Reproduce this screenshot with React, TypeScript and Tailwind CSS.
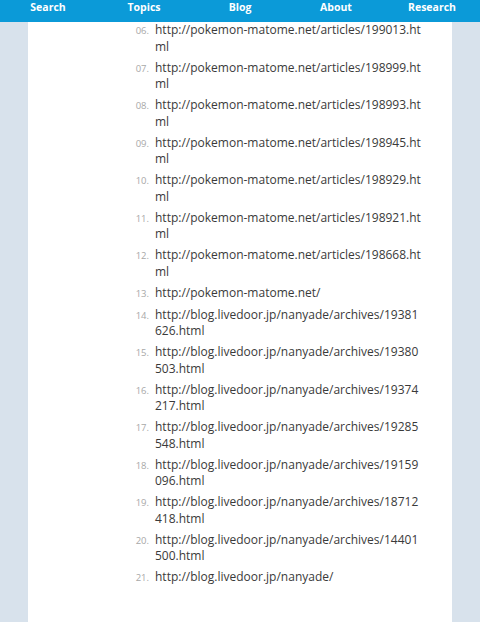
const links = [
  { n: '06.', url: 'http://pokemon-matome.net/articles/199013.html' },
  { n: '07.', url: 'http://pokemon-matome.net/articles/198999.html' },
  { n: '08.', url: 'http://pokemon-matome.net/articles/198993.html' },
  { n: '09.', url: 'http://pokemon-matome.net/articles/198945.html' },
  { n: '10.', url: 'http://pokemon-matome.net/articles/198929.html' },
  { n: '11.', url: 'http://pokemon-matome.net/articles/198921.html' },
  { n: '12.', url: 'http://pokemon-matome.net/articles/198668.html' },
  { n: '13.', url: 'http://pokemon-matome.net/' },
  { n: '14.', url: 'http://blog.livedoor.jp/nanyade/archives/19381626.html' },
  { n: '15.', url: 'http://blog.livedoor.jp/nanyade/archives/19380503.html' },
  { n: '16.', url: 'http://blog.livedoor.jp/nanyade/archives/19374217.html' },
  { n: '17.', url: 'http://blog.livedoor.jp/nanyade/archives/19285548.html' },
  { n: '18.', url: 'http://blog.livedoor.jp/nanyade/archives/19159096.html' },
  { n: '19.', url: 'http://blog.livedoor.jp/nanyade/archives/18712418.html' },
  { n: '20.', url: 'http://blog.livedoor.jp/nanyade/archives/14401500.html' },
  { n: '21.', url: 'http://blog.livedoor.jp/nanyade/' },
];

const nav = ['Search', 'Topics', 'Blog', 'About', 'Research'];

export default function App() {
  return (
    <div className="w-[480px] h-[622px] overflow-hidden bg-[#d8e2ec] font-['Open_Sans',sans-serif]">
      {/* NAV */}
      <header className="h-[22px] bg-[#0b9ad8] grid grid-cols-5">
        {nav.map((item) => (
          <span
            key={item}
            className="text-center text-white text-[10.5px] font-bold leading-[14px]"
          >
            {item}
          </span>
        ))}
      </header>

      {/* CONTENT */}
      <main className="mx-[28px] h-[600px] bg-white">
        <ol className="pl-[100px]">
          {links.map((link) => (
            <li key={link.n} className="flex mb-[4.5px]">
              <span className="w-[27px] pr-[6px] text-right text-[9.5px] leading-[16.5px] pt-[1px] text-[#a8a8a8]">
                {link.n}
              </span>
              <span className="w-[266px] break-all text-[12px] leading-[16.5px] text-[#3a3a3a]">
                {link.url}
              </span>
            </li>
          ))}
        </ol>
      </main>
    </div>
  );
}
